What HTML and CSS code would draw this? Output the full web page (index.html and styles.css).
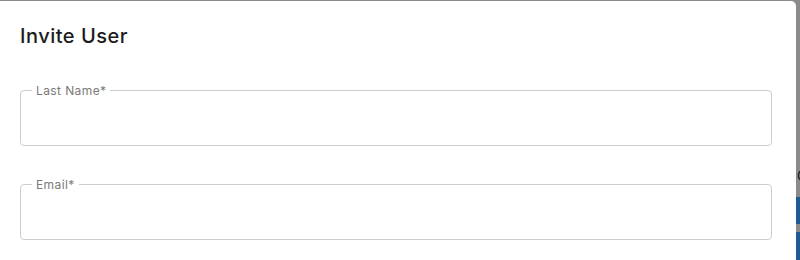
FILE: index.html
```html
<!DOCTYPE html>
<html>
  <head>
    <meta name='viewport' content='width=device-width, initial-scale=1'>
    <title>Invite User</title>
    <link rel="stylesheet" href="styles.css">
  </head>
<body>
<div class='page'>
  <form class='dialog' id='inviteForm'>
    <h2 class='title'>Invite User</h2>

    <fieldset class='field'>
      <legend class='label'>Last Name*</legend>
      <input type='text' id='last_name' name='last_name' class='input'>
    </fieldset>

    <fieldset class='field'>
      <legend class='label'>Email*</legend>
      <input type='email' id='email' name='email' class='input'>
    </fieldset>
  </form>

  <div class='behind'>
    <span class='behind_text'>C</span>
    <div class='behind_bar'></div>
    <div class='behind_gap'></div>
    <div class='behind_bar tall'></div>
  </div>
</div>
</body>
</html>
```

FILE: styles.css
```css
* {font-family: Inter, "Noto Sans", sans-serif; box-sizing: border-box;}

body {margin: 0; background-color: #8b8b8b; overflow: hidden;}
.page {display: flex; height: 260px; padding-top: 1px;}

.dialog {width: 796px; flex: none; background: white; border-top-right-radius: 5px; padding: 23px 24px 0 20px;}
.title {margin: 0 0 35px 0; font-size: 20px; line-height: 24px; font-weight: 500; color: #1c1c1c; letter-spacing: 0.5px;}

.field {margin: 0 0 31px 0; padding: 0 11px; border: 1px solid #cdcdcd; border-radius: 4px; height: 63px;}
.label {padding: 0 4px; font-size: 12px; line-height: 15px; color: #7a7a7a; letter-spacing: 0.4px;}
.input {display: block; width: 100%; height: 46px; border: none; outline: none; font-size: 15px; background: transparent;}

.behind {flex: 1; display: flex; flex-direction: column; padding-top: 167px; overflow: hidden;}
.behind_text {font-size: 14px; line-height: 16px; color: #1a1a1a; margin-left: 1px; height: 31px;}
.behind_bar {height: 29px; background: #1f5a96;}
.behind_gap {height: 8px;}
.behind_bar.tall {height: 30px;}
```
